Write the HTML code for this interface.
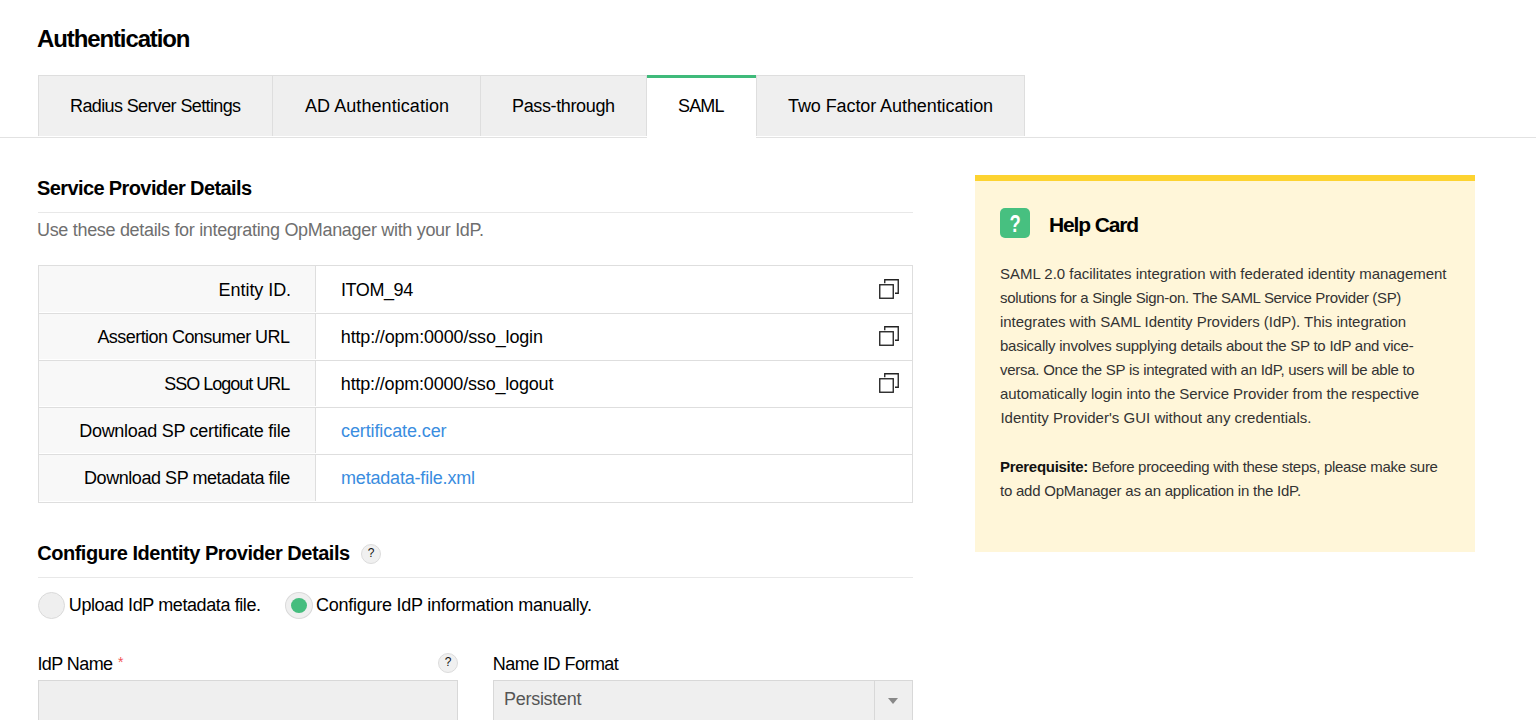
<!DOCTYPE html><html><head><meta charset="utf-8"><style>
html,body{margin:0;padding:0;background:#fff;width:1536px;height:720px;overflow:hidden;position:relative}
body{font-family:"Liberation Sans",sans-serif}
.tx{position:absolute;white-space:nowrap}
.bx{position:absolute;box-sizing:border-box}
.cp{position:absolute}
</style></head><body>
<div class="bx" style="left:0;top:137px;width:1536px;height:1px;background:#e2e2e2"></div>
<div class="bx" style="left:38px;top:75px;width:235px;height:61px;background:#f0f0f0;border:1px solid #dedede;border-bottom:0"></div>
<div class="bx" style="left:273px;top:75px;width:208px;height:61px;background:#efefef;border-top:1px solid #dedede;border-right:1px solid #dedede"></div>
<div class="bx" style="left:481px;top:75px;width:166px;height:61px;background:#efefef;border-top:1px solid #dedede;border-right:1px solid #dedede"></div>
<div class="bx" style="left:647px;top:75px;width:109px;height:63px;background:#fff;border-top:3px solid #3fba7a"></div>
<div class="bx" style="left:756px;top:75px;width:269px;height:61px;background:#efefef;border:1px solid #dedede;border-bottom:0"></div>
<div class="bx" style="left:38px;top:212px;width:875px;height:1px;background:#e8e8e8"></div>
<div class="bx" style="left:38px;top:577px;width:875px;height:1px;background:#e8e8e8"></div>
<div class="bx" style="left:38px;top:265px;width:875px;height:238px;border:1px solid #dedede;background:#fff"></div>
<div class="bx" style="left:39px;top:266px;width:277px;height:46px;background:#f8f8f8;border-right:1px solid #dedede"></div>
<div class="bx" style="left:39px;top:314px;width:277px;height:45px;background:#f8f8f8;border-right:1px solid #dedede"></div>
<div class="bx" style="left:39px;top:361px;width:277px;height:45px;background:#f8f8f8;border-right:1px solid #dedede"></div>
<div class="bx" style="left:39px;top:408px;width:277px;height:45px;background:#f8f8f8;border-right:1px solid #dedede"></div>
<div class="bx" style="left:39px;top:455px;width:277px;height:46px;background:#f8f8f8;border-right:1px solid #dedede"></div>
<div class="bx" style="left:39px;top:313px;width:873px;height:1px;background:#dedede"></div>
<div class="bx" style="left:39px;top:360px;width:873px;height:1px;background:#dedede"></div>
<div class="bx" style="left:39px;top:407px;width:873px;height:1px;background:#dedede"></div>
<div class="bx" style="left:39px;top:454px;width:873px;height:1px;background:#dedede"></div>
<svg class="cp" style="left:879px;top:279px" width="21" height="21" viewBox="0 0 21 21"><rect x="0.75" y="5.75" width="13.5" height="13.5" fill="none" stroke="#222" stroke-width="1.35"/><path d="M5.75 4.2V0.75H19.25V14.25H16" fill="none" stroke="#222" stroke-width="1.35"/></svg>
<svg class="cp" style="left:879px;top:326px" width="21" height="21" viewBox="0 0 21 21"><rect x="0.75" y="5.75" width="13.5" height="13.5" fill="none" stroke="#222" stroke-width="1.35"/><path d="M5.75 4.2V0.75H19.25V14.25H16" fill="none" stroke="#222" stroke-width="1.35"/></svg>
<svg class="cp" style="left:879px;top:373px" width="21" height="21" viewBox="0 0 21 21"><rect x="0.75" y="5.75" width="13.5" height="13.5" fill="none" stroke="#222" stroke-width="1.35"/><path d="M5.75 4.2V0.75H19.25V14.25H16" fill="none" stroke="#222" stroke-width="1.35"/></svg>
<div class="bx" style="left:975px;top:175px;width:500px;height:377px;background:#fff6d9;border-top:6px solid #fdd330"></div>
<div class="bx" style="left:1000px;top:208px;width:30px;height:30px;background:#47c080;border-radius:5px"></div>
<div class="tx" style="left:1000px;top:208.5px;width:30px;height:30px;line-height:30px;text-align:center;color:#fff;font-weight:700;font-size:23px;transform:scaleX(0.8)">?</div>
<div class="bx" style="left:361px;top:544px;width:20px;height:20px;border-radius:50%;background:#f0f0f0;border:1px solid #dcdcdc"></div><div class="tx" style="left:361px;top:543px;width:20px;line-height:20px;text-align:center;font-size:12px;color:#111">?</div>
<div class="bx" style="left:438px;top:653px;width:20px;height:20px;border-radius:50%;background:#f0f0f0;border:1px solid #dcdcdc"></div><div class="tx" style="left:438px;top:652px;width:20px;line-height:20px;text-align:center;font-size:12px;color:#111">?</div>
<div class="bx" style="left:38px;top:592px;width:27px;height:27px;border-radius:50%;background:#efefef;border:1px solid #dadada"></div>
<div class="bx" style="left:285px;top:592px;width:28px;height:27px;border-radius:50%;background:#efefef;border:1px solid #dadada"></div>
<div class="bx" style="left:291px;top:598px;width:16px;height:15.2px;border-radius:50%;background:#45bd7e"></div>
<div class="bx" style="left:38px;top:680px;width:420px;height:60px;background:#efefef;border:1px solid #d8d8d8"></div>
<div class="bx" style="left:493px;top:680px;width:420px;height:60px;background:#efefef;border:1px solid #d8d8d8"></div>
<div class="bx" style="left:874px;top:681px;width:1px;height:60px;background:#d8d8d8"></div>
<svg style="position:absolute;left:888px;top:697.8px" width="10" height="6" viewBox="0 0 10 6"><path d="M0 0H10L5 6Z" fill="#888"/></svg>
<div class="tx" style="left:118px;top:655px;font-size:14px;line-height:14px;color:#f25454">*</div>
<div id="title" class="tx" style="left:37.00px;top:27.01px;font-size:24px;line-height:24px;font-weight:700;color:#000;letter-spacing:-1.115px">Authentication</div>
<div id="t1" class="tx" style="left:70.00px;top:97.01px;font-size:18px;line-height:18px;font-weight:400;color:#000;letter-spacing:-0.619px">Radius Server Settings</div>
<div id="t2" class="tx" style="left:305.00px;top:97.01px;font-size:18px;line-height:18px;font-weight:400;color:#000;letter-spacing:0.063px">AD Authentication</div>
<div id="t3" class="tx" style="left:512.00px;top:97.01px;font-size:18px;line-height:18px;font-weight:400;color:#000;letter-spacing:-0.364px">Pass-through</div>
<div id="t4" class="tx" style="left:678.00px;top:97.01px;font-size:18px;line-height:18px;font-weight:400;color:#000;letter-spacing:-0.833px">SAML</div>
<div id="t5" class="tx" style="left:788.00px;top:97.01px;font-size:18px;line-height:18px;font-weight:400;color:#000;letter-spacing:-0.083px">Two Factor Authentication</div>
<div id="h1" class="tx" style="left:37.00px;top:178.01px;font-size:20px;line-height:20px;font-weight:700;color:#000;letter-spacing:-0.609px">Service Provider Details</div>
<div id="sub" class="tx" style="left:37.00px;top:221.01px;font-size:18px;line-height:18px;font-weight:400;color:#6f6f6f;letter-spacing:-0.316px">Use these details for integrating OpManager with your IdP.</div>
<div id="l1" class="tx" style="left:218.60px;top:281.01px;font-size:18px;line-height:18px;font-weight:400;color:#000;letter-spacing:-0.056px">Entity ID.</div>
<div id="l2" class="tx" style="left:97.40px;top:328.01px;font-size:18px;line-height:18px;font-weight:400;color:#000;letter-spacing:-0.548px">Assertion Consumer URL</div>
<div id="l3" class="tx" style="left:164.20px;top:375.01px;font-size:18px;line-height:18px;font-weight:400;color:#000;letter-spacing:-1.000px">SSO Logout URL</div>
<div id="l4" class="tx" style="left:79.20px;top:422.01px;font-size:18px;line-height:18px;font-weight:400;color:#000;letter-spacing:-0.278px">Download SP certificate file</div>
<div id="l5" class="tx" style="left:84.00px;top:469.01px;font-size:18px;line-height:18px;font-weight:400;color:#000;letter-spacing:-0.438px">Download SP metadata file</div>
<div id="v1" class="tx" style="left:341.00px;top:281.01px;font-size:18px;line-height:18px;font-weight:400;color:#000;letter-spacing:-0.417px">ITOM_94</div>
<div id="v2" class="tx" style="left:340.80px;top:328.01px;font-size:18px;line-height:18px;font-weight:400;color:#000;letter-spacing:-0.167px">http://opm:0000/sso_login</div>
<div id="v3" class="tx" style="left:340.80px;top:375.01px;font-size:18px;line-height:18px;font-weight:400;color:#000;letter-spacing:-0.180px">http://opm:0000/sso_logout</div>
<div id="v4" class="tx" style="left:341.00px;top:422.01px;font-size:18px;line-height:18px;font-weight:400;color:#3a8de0;letter-spacing:-0.107px">certificate.cer</div>
<div id="v5" class="tx" style="left:341.00px;top:469.01px;font-size:18px;line-height:18px;font-weight:400;color:#3a8de0;letter-spacing:-0.188px">metadata-file.xml</div>
<div id="hc" class="tx" style="left:1049.00px;top:214.00px;font-size:21px;line-height:21px;font-weight:700;color:#000;letter-spacing:-1.125px">Help Card</div>
<div id="p1" class="tx" style="left:1000.00px;top:266.01px;font-size:15px;line-height:15px;font-weight:400;color:#333;letter-spacing:-0.023px">SAML 2.0 facilitates integration with federated identity management</div>
<div id="p2" class="tx" style="left:1000.00px;top:290.01px;font-size:15px;line-height:15px;font-weight:400;color:#333;letter-spacing:-0.336px">solutions for a Single Sign-on. The SAML Service Provider (SP)</div>
<div id="p3" class="tx" style="left:1000.00px;top:314.01px;font-size:15px;line-height:15px;font-weight:400;color:#333;letter-spacing:-0.040px">integrates with SAML Identity Providers (IdP). This integration</div>
<div id="p4" class="tx" style="left:1000.00px;top:338.01px;font-size:15px;line-height:15px;font-weight:400;color:#333;letter-spacing:-0.246px">basically involves supplying details about the SP to IdP and vice-</div>
<div id="p5" class="tx" style="left:1000.00px;top:362.01px;font-size:15px;line-height:15px;font-weight:400;color:#333;letter-spacing:-0.265px">versa. Once the SP is integrated with an IdP, users will be able to</div>
<div id="p6" class="tx" style="left:1000.00px;top:386.01px;font-size:15px;line-height:15px;font-weight:400;color:#333;letter-spacing:-0.055px">automatically login into the Service Provider from the respective</div>
<div id="p7" class="tx" style="left:1000.40px;top:410.01px;font-size:15px;line-height:15px;font-weight:400;color:#333;letter-spacing:0.011px">Identity Provider's GUI without any credentials.</div>
<div id="p8" class="tx" style="left:1000.00px;top:459.01px;font-size:15px;line-height:15px;font-weight:400;color:#333;letter-spacing:-0.292px"><b style='color:#111'>Prerequisite:</b> Before proceeding with these steps, please make sure</div>
<div id="p9" class="tx" style="left:1000.00px;top:483.01px;font-size:15px;line-height:15px;font-weight:400;color:#333;letter-spacing:-0.233px">to add OpManager as an application in the IdP.</div>
<div id="h2" class="tx" style="left:37.20px;top:543.01px;font-size:20px;line-height:20px;font-weight:700;color:#000;letter-spacing:-0.471px">Configure Identity Provider Details</div>
<div id="r1" class="tx" style="left:68.80px;top:596.01px;font-size:18px;line-height:18px;font-weight:400;color:#000;letter-spacing:-0.396px">Upload IdP metadata file.</div>
<div id="r2" class="tx" style="left:316.00px;top:596.01px;font-size:18px;line-height:18px;font-weight:400;color:#000;letter-spacing:-0.250px">Configure IdP information manually.</div>
<div id="f1" class="tx" style="left:37.40px;top:655.01px;font-size:18px;line-height:18px;font-weight:400;color:#000;letter-spacing:-0.571px">IdP Name</div>
<div id="f2" class="tx" style="left:492.80px;top:655.01px;font-size:18px;line-height:18px;font-weight:400;color:#000;letter-spacing:-0.538px">Name ID Format</div>
<div id="sel" class="tx" style="left:504.00px;top:690.01px;font-size:18px;line-height:18px;font-weight:400;color:#555;letter-spacing:-0.278px">Persistent</div>
</body></html>
